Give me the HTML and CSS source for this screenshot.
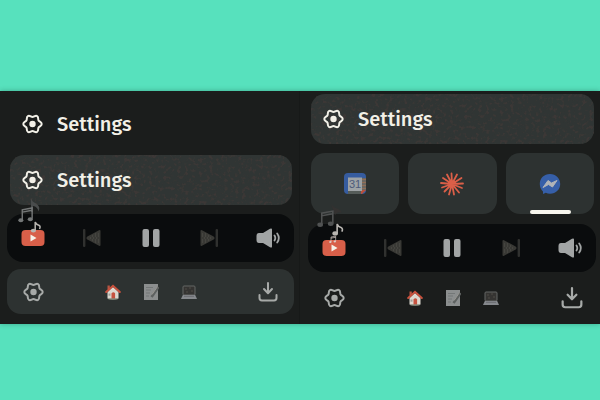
FILE: index.html
```
<!DOCTYPE html>
<html lang="en">
<head>
<meta charset="utf-8">
<meta name="viewport" content="width=device-width, initial-scale=1">
<title>Settings</title>
<link rel="stylesheet" href="styles.css">
</head>
<body>
<svg class="defs" aria-hidden="true">
  <defs>
    <filter id="grain" x="0" y="0" width="100%" height="100%" color-interpolation-filters="sRGB">
      <feTurbulence type="fractalNoise" baseFrequency="0.28" numOctaves="2" seed="8"/>
      <feColorMatrix values="0 0 0 0 0.25  0 0 0 0 0.225  0 0 0 0 0.215  5 0 0 0 -2.6"/>
    </filter>
    <symbol id="gear" viewBox="0 0 20 20">
      <path d="M19.2 10C19.2 8 16.8 7.800 16.060 6.500C15.300 5.200 16.300 3 14.600 2.030C12.900 1.030 11.500 3 10 3C8.500 3 7.100 1.030 5.400 2.030C3.700 3 4.700 5.200 3.940 6.500C3.200 7.800 .8 8 .8 10C.8 12 3.200 12.200 3.940 13.500C4.700 14.800 3.700 17 5.400 17.970C7.100 18.970 8.500 17 10 17C11.500 17 12.900 18.970 14.600 17.970C16.300 17 15.300 14.800 16.060 13.500C16.800 12.200 19.200 12 19.200 10Z" fill="none" stroke="currentColor" stroke-width="2" stroke-linejoin="round"/>
      <circle cx="10" cy="10" r="3.2" fill="currentColor"/>
    </symbol>
    <symbol id="video" viewBox="0 0 24 18">
      <rect x=".5" y="1" width="23" height="16" rx="4" fill="#d85f49"/>
      <path d="M9.500 5.500v7l6-3.500z" fill="#f6f1e8"/>
    </symbol>
    <symbol id="prev" viewBox="0 0 20 18">
      <rect x="1" y="0" width="2.400" height="18" rx="1" fill="#30312f"/>
      <path d="M18.500 2v14q0 1.400-1.500.8L5.400 10.600Q3.500 9 5.400 7.400L17 1.200Q18.500 .6 18.500 2Z" fill="#393935"/>
      <path d="M8 9h9M10 7h7M10 11h7M13 5h4M13 13h4" stroke="#53524d" stroke-width="1" stroke-dasharray="1 2"/>
    </symbol>
    <symbol id="pause" viewBox="0 0 20 20">
      <rect x="1.500" y="1" width="6.500" height="18" rx="2" fill="#a2a5a5"/>
      <rect x="12" y="1" width="6.500" height="18" rx="2" fill="#a2a5a5"/>
    </symbol>
    <symbol id="volume" viewBox="0 0 24 20">
      <path d="M3 5H7L14 .8q2-1.100 2 .8v16.800q0 1.900-2 .8L7 15H3Q.5 15 .5 12V8Q.5 5 3 5Z" fill="#a2a5a5"/>
      <path d="M18.500 7.500q1.600 2.500 0 5M21.200 5.500q3.200 4.500 0 9" fill="none" stroke="#a2a5a5" stroke-width="1.800" stroke-linecap="round"/>
    </symbol>
    <symbol id="download" viewBox="0 0 20 20">
      <path d="M10 1v9.500M6 7l4 4.200L14 7M1.500 13v3q0 2.400 2.400 2.400h12.200q2.400 0 2.400-2.400v-3" fill="none" stroke="currentColor" stroke-width="2" stroke-linecap="round" stroke-linejoin="round"/>
    </symbol>
    <symbol id="house" viewBox="0 0 16 16">
      <path d="M2.500 8 8 3l5.500 5v6.500q-5.500 2-11 0Z" fill="#ded9d0"/>
      <path d="M2.500 1.500h2.300v4H2.500z" fill="#b75543"/>
      <path d="M1.200 8 8 1.800 14.800 8" fill="none" stroke="#c9513d" stroke-width="2" stroke-linecap="round"/>
      <path d="M6.500 9.300q2-2 3.600 0v5.500H6.500z" fill="#c65340"/>
      <path d="M3.500 9.500h2v2.200h-2z" fill="#a3a19c"/>
      <path d="M3.500 15h9" stroke="#77806f" stroke-width="1.200"/>
    </symbol>
    <symbol id="memo" viewBox="0 0 16 16">
      <path d="M1 0h14v16H1z" fill="#8b8e8e"/>
      <path d="M3 3.500h7M3 6h5M3 9h4M3 12h3" stroke="#737777" stroke-width="1"/>
      <path d="M15.500 3 10 11 8.500 13" fill="none" stroke="#5d6160" stroke-width="2.500"/>
      <path d="M14.500 2.500 9 10.500" stroke="#9b9994" stroke-width="1"/>
    </symbol>
    <symbol id="laptop" viewBox="0 0 16 16">
      <rect x="2" y="2" width="12" height="9" rx="1" fill="#353432" stroke="#656664" stroke-width="1"/>
      <path d="M4 5h2M8 4h2M10 7h2M5 8h2" stroke="#514c47" stroke-width="1"/>
      <path d="M1.800 11h12.400L16 15H0Z" fill="#85888c"/>
      <path d="M3 12.300h10" stroke="#686b6e" stroke-width="1"/>
    </symbol>
    <symbol id="beamed" viewBox="0 0 18 17">
      <path d="M4.500 14V3L15 1v11.500M4.500 5.500 15 3.500" fill="none" stroke="currentColor" stroke-width="1.500"/>
      <ellipse cx="3" cy="14" rx="2.700" ry="2.100" fill="currentColor"/>
      <ellipse cx="13" cy="13" rx="2.700" ry="2.100" fill="currentColor"/>
    </symbol>
    <symbol id="note" viewBox="0 0 12 12">
      <path d="M5.200 9.500V1q1 2.600 3.600 3.200Q11 5.200 9.500 8" fill="none" stroke="currentColor" stroke-width="1.500"/>
      <ellipse cx="3.400" cy="9.600" rx="2.600" ry="1.900" fill="currentColor"/>
    </symbol>
  </defs>
</svg>

<main class="stage">
  <section class="panel panel-left">
    <button class="row row-plain" type="button">
      <svg class="icon-gear"><use href="#gear"/></svg><span>Settings</span>
    </button>
    <button class="row row-hover" type="button">
      <svg class="grain" aria-hidden="true"><rect width="100%" height="100%" filter="url(#grain)"/></svg>
      <svg class="icon-gear"><use href="#gear"/></svg><span>Settings</span>
    </button>
    <div class="player">
      <button class="control source" type="button" aria-label="Video">
        <svg class="icon-video"><use href="#video"/></svg>
        <svg class="notes" viewBox="0 0 36 56" aria-hidden="true">
          <path d="M19 19V5q1 4 5 5.500 5 3 2.500 8-1-5-5.500-5.500V19" fill="#494c4c"/>
          <use href="#beamed" class="note-mid" x="6" y="14" width="17" height="16"/>
          <use href="#note" class="note-bright" x="18" y="28" width="12" height="12"/>
        </svg>
      </button>
      <button class="control" type="button" aria-label="Previous"><svg class="icon-skip"><use href="#prev"/></svg></button>
      <button class="control" type="button" aria-label="Pause"><svg class="icon-pause"><use href="#pause"/></svg></button>
      <button class="control" type="button" aria-label="Next"><svg class="icon-skip icon-next"><use href="#prev"/></svg></button>
      <button class="control" type="button" aria-label="Volume"><svg class="icon-volume"><use href="#volume"/></svg></button>
    </div>
    <nav class="dock dock-filled" aria-label="Spaces">
      <button class="control" type="button" aria-label="Settings"><svg class="icon-gear"><use href="#gear"/></svg></button>
      <div class="spaces">
        <button class="space" type="button" aria-label="Home"><svg><use href="#house"/></svg></button>
        <button class="space" type="button" aria-label="Notes"><svg><use href="#memo"/></svg></button>
        <button class="space" type="button" aria-label="Work"><svg><use href="#laptop"/></svg></button>
      </div>
      <button class="control" type="button" aria-label="Downloads"><svg class="icon-download"><use href="#download"/></svg></button>
    </nav>
  </section>

  <section class="panel panel-right">
    <button class="row row-hover" type="button">
      <svg class="grain" aria-hidden="true"><rect width="100%" height="100%" filter="url(#grain)"/></svg>
      <svg class="icon-gear"><use href="#gear"/></svg><span>Settings</span>
    </button>
    <div class="tiles">
      <button class="tile" type="button" aria-label="Calendar">
        <svg class="icon-app" viewBox="0 0 24 24">
          <rect x="1" y="1" width="22" height="21" rx="4" fill="#365c9f"/>
          <path d="M18 6h5v12l-5 4z" fill="#6d6861"/>
          <path d="M20 7v11M22 7v11" stroke="#b8754e" stroke-width="1" stroke-dasharray="1 2"/>
          <path d="M18 18h5l-4 4h-1z" fill="#b9503e"/>
          <path d="M5 18h13v4H5z" fill="#555c59"/>
          <path d="M5 5.500h14V19H5z" fill="#9ea3a6"/>
          <text x="12" y="16" text-anchor="middle" class="date">31</text>
        </svg>
      </button>
      <button class="tile" type="button" aria-label="Assistant">
        <svg class="icon-app" viewBox="0 0 24 24">
          <path d="M12 12 11.500 1.500M12 12 17 2.500M12 12 21.500 6M12 12 23 11.500M12 12 22 16M12 12 19 20.500M12 12 14 22.500M12 12 9 22.500M12 12 4.500 19.500M12 12 2 15.500M12 12 1 11M12 12 3 6M12 12 7 2.500" stroke="#db5f48" stroke-width="1.800" stroke-linecap="round"/>
        </svg>
      </button>
      <button class="tile tile-active" type="button" aria-label="Messenger">
        <svg class="icon-app" viewBox="0 0 24 24">
          <path d="M12 2C6 2 1.800 6.300 1.800 12c0 3.100 1.200 5.700 3.200 7.500V22l2.800-1.200c1.300.6 2.700.9 4.200.9 6 0 10.200-4.300 10.200-9.700S18 2 12 2Z" fill="#365fa8"/>
          <path d="M5 15.500 10 8.500 13.500 11 19 8.500 14.500 15 10.500 12.500Z" fill="#b0b4b8" stroke="#b0b4b8" stroke-linejoin="round"/>
        </svg>
      </button>
    </div>
    <div class="player">
      <button class="control source" type="button" aria-label="Video">
        <svg class="icon-video"><use href="#video"/></svg>
        <svg class="notes" viewBox="0 0 36 56" aria-hidden="true">
          <path d="M18 1q2 3 6 4.500 5 2 4 4-4-1-6 2.500Q20 6 18 1" fill="#343231"/>
          <use href="#beamed" class="note-dim" x="4" y="7" width="19" height="18"/>
          <use href="#note" class="note-bright" x="18" y="20" width="14" height="13"/>
          <use href="#beamed" class="note-light" x="16" y="32" width="8" height="9"/>
        </svg>
      </button>
      <button class="control" type="button" aria-label="Previous"><svg class="icon-skip"><use href="#prev"/></svg></button>
      <button class="control" type="button" aria-label="Pause"><svg class="icon-pause"><use href="#pause"/></svg></button>
      <button class="control" type="button" aria-label="Next"><svg class="icon-skip icon-next"><use href="#prev"/></svg></button>
      <button class="control" type="button" aria-label="Volume"><svg class="icon-volume"><use href="#volume"/></svg></button>
    </div>
    <nav class="dock dock-plain" aria-label="Spaces">
      <button class="control" type="button" aria-label="Settings"><svg class="icon-gear"><use href="#gear"/></svg></button>
      <div class="spaces">
        <button class="space" type="button" aria-label="Home"><svg><use href="#house"/></svg></button>
        <button class="space" type="button" aria-label="Notes"><svg><use href="#memo"/></svg></button>
        <button class="space" type="button" aria-label="Work"><svg><use href="#laptop"/></svg></button>
      </div>
      <button class="control" type="button" aria-label="Downloads"><svg class="icon-download icon-download-large"><use href="#download"/></svg></button>
    </nav>
  </section>
</main>
</body>
</html>
```
FILE: styles.css
```
* { box-sizing: border-box; }

body {
  margin: 0;
  min-height: 100vh;
  padding-top: 91px;
  background: #57e1bd;
  font-family: "Fira Sans", "Noto Sans", sans-serif;
}

button {
  margin: 0;
  padding: 0;
  border: 0;
  background: none;
  color: inherit;
  font: inherit;
}

svg { display: block; overflow: visible; }

.defs { position: absolute; width: 0; height: 0; }

.stage {
  display: grid;
  grid-template-columns: 1fr 1fr;
  background: #1b1d1c;
  box-shadow: 0 0 5px rgba(0, 40, 30, 0.3);
}

.panel { display: flex; flex-direction: column; }
.panel-left { padding: 8px 5px 10px 7px; border-right: 1px solid #171918; }
.panel-right { padding: 3px 4px 0 8px; }

.row {
  position: relative;
  display: flex;
  align-items: center;
  gap: 14px;
  height: 50px;
  margin: 0 2px 0 3px;
  padding: 0 12px;
  border-radius: 14px;
  overflow: hidden;
  color: #f2f0e7;
  font-size: 20px;
  font-weight: 500;
  text-align: left;
}

.row-plain { margin-bottom: 6px; }
.row-hover { margin-bottom: 9px; background: #303534; }
.row span, .row .icon-gear { position: relative; }

.grain { position: absolute; inset: 0; width: 100%; height: 100%; opacity: 0.8; }

.icon-gear { width: 21px; height: 20px; }

.tiles {
  display: grid;
  grid-template-columns: repeat(3, 1fr);
  gap: 9px;
  margin: 0 2px 10px 3px;
}

.tile {
  position: relative;
  display: grid;
  place-items: center;
  height: 61px;
  border-radius: 14px;
  background: #2d3231;
}

.tile-active::after {
  content: "";
  position: absolute;
  bottom: 0;
  left: 50%;
  width: 41px;
  height: 4px;
  margin-left: -20px;
  border-radius: 2px;
  background: #f7f5ed;
}

.icon-app { width: 24px; height: 24px; }
.date { font: 400 11px "Liberation Sans", sans-serif; fill: #4d5b7a; }

.player, .dock {
  display: flex;
  align-items: center;
  justify-content: space-between;
  padding: 0 14px;
}

.player { height: 48px; border-radius: 16px; background: #0a0c0d; }

.dock { height: 52px; color: #a7aaa8; }
.dock-plain { padding-right: 12px; }
.dock-filled { height: 45px; margin-top: 7px; border-radius: 14px; background: #2d3231; }

.control { display: grid; place-items: center; width: 24px; height: 24px; }

.source { position: relative; }
.notes { position: absolute; top: -33px; left: -9px; width: 36px; height: 56px; pointer-events: none; }
.note-bright { color: #b9b6b1; }
.note-mid { color: #747777; }
.note-dim { color: #505252; }
.note-light { color: #dcd0ca; }

.icon-video { width: 24px; height: 18px; }
.icon-skip { width: 20px; height: 18px; }
.icon-next { transform: scaleX(-1); }
.icon-pause { width: 20px; height: 20px; }
.icon-volume { width: 24px; height: 20px; }
.icon-download { width: 20px; height: 20px; }
.icon-download-large { width: 22px; height: 22px; }

.spaces { display: flex; gap: 22px; }
.space svg { width: 16px; height: 16px; }
```
